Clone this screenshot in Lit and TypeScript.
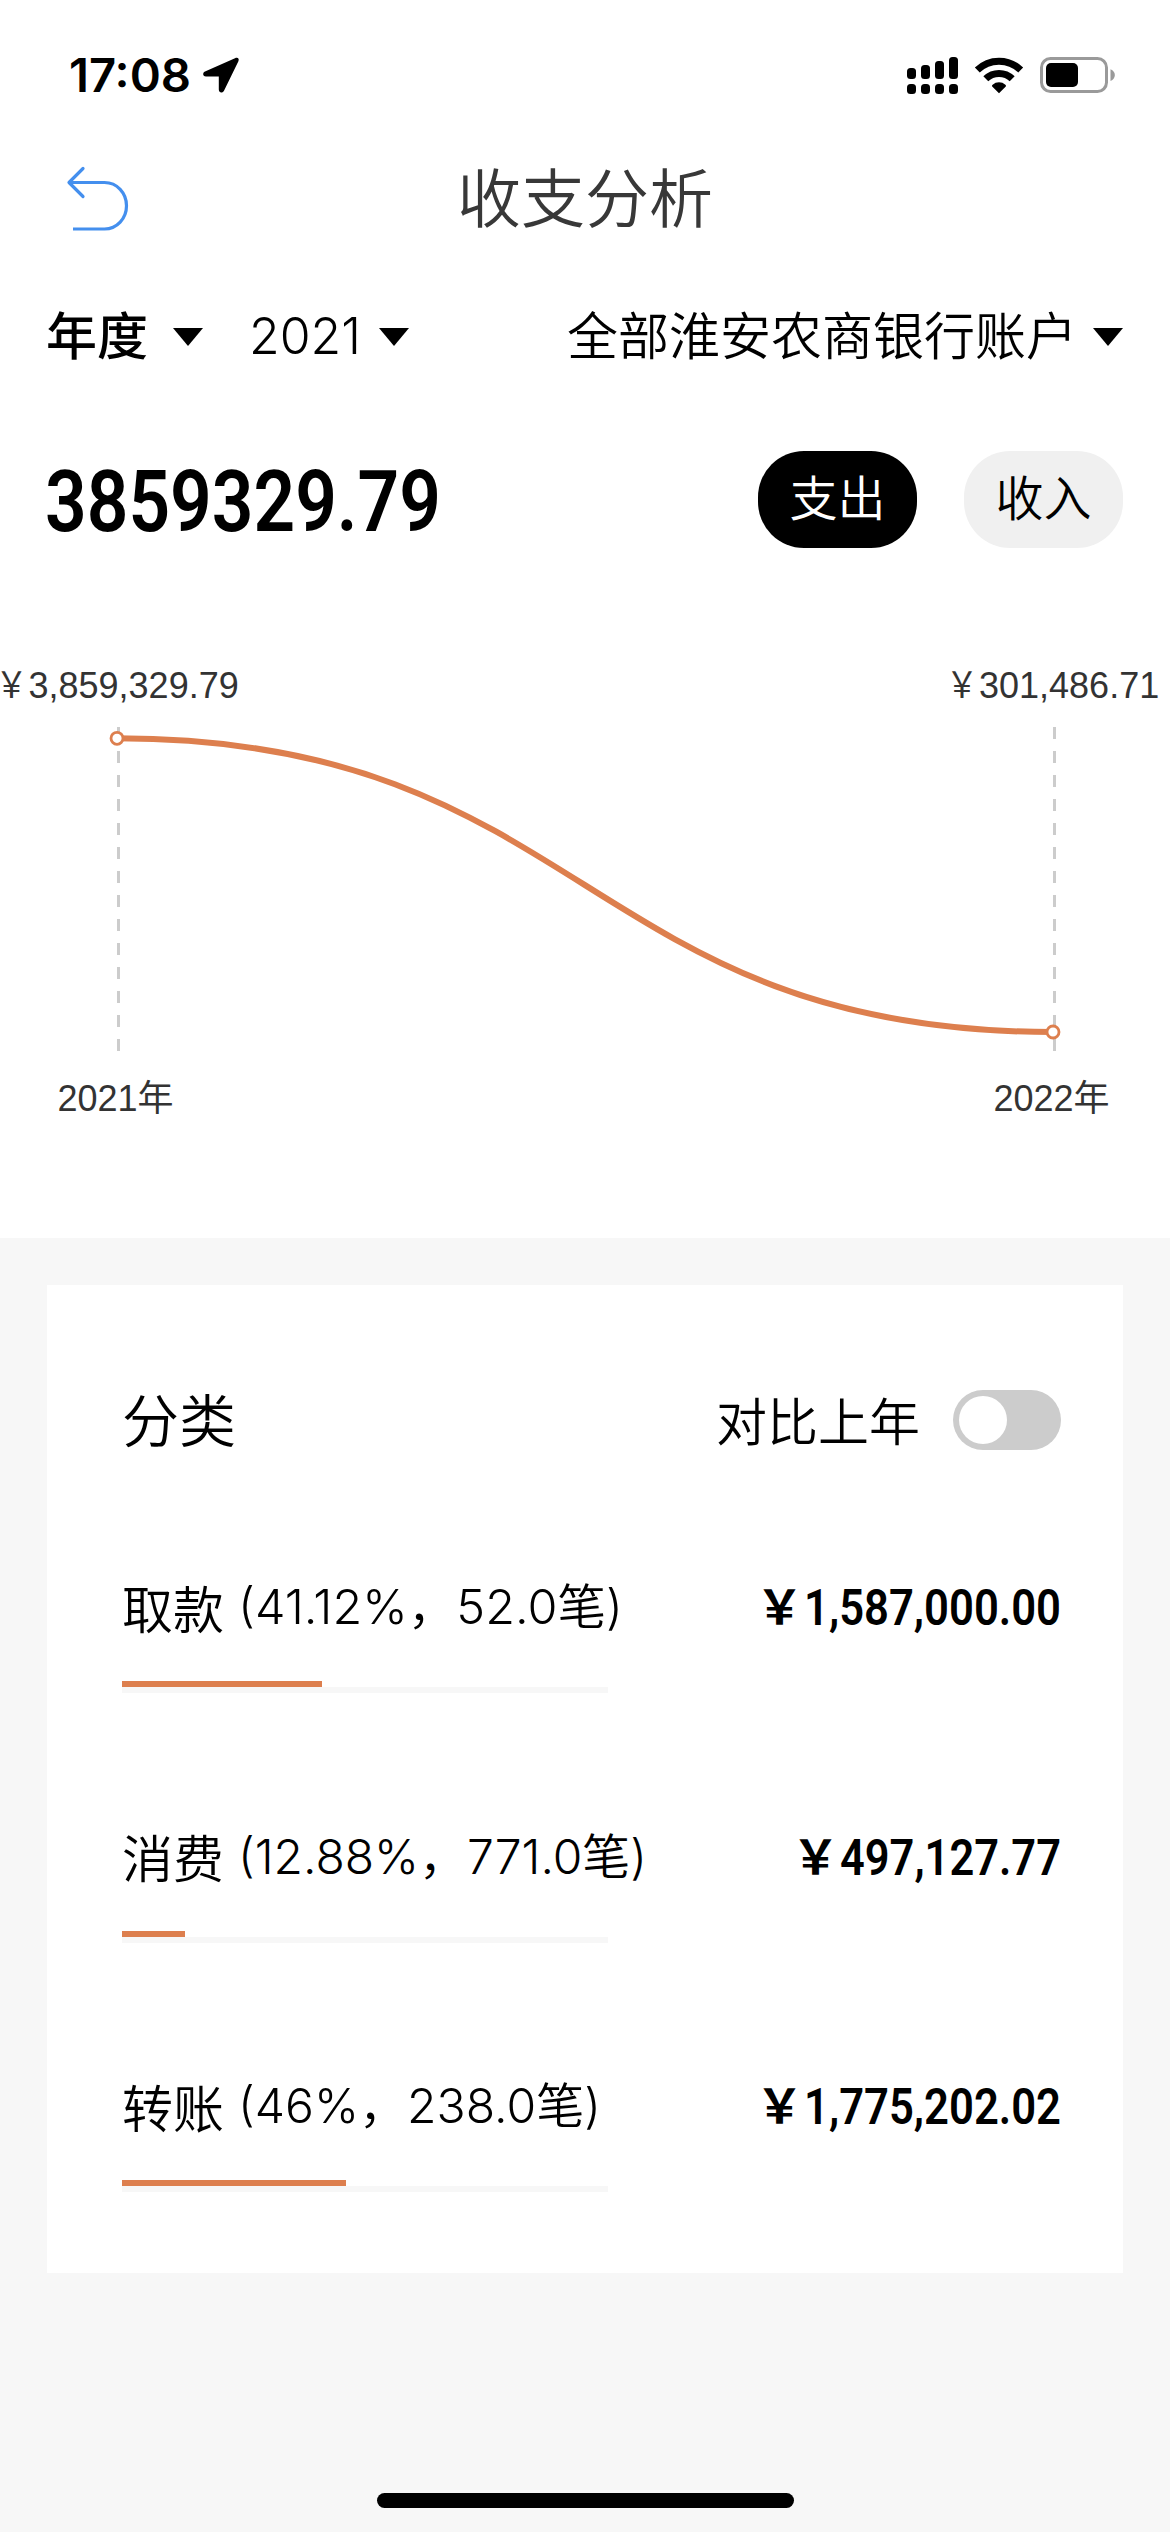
import { LitElement, html, svg, css } from "lit";
import { customElement, state } from "lit/decorators.js";

interface Category {
  name: string;
  detail: string;
  detailWidth: number;
  percent: number;
  amount: string;
  amountWidth: number;
}

interface YearPoint {
  x: number;
  y: number;
  amount: string;
  symbolX: number;
  amountX: number;
  label: string;
  labelX: number;
}

const CATEGORIES: Category[] = [
  { name: "取款", detail: "(41.12%，52.0笔)", detailWidth: 385, percent: 41.12, amount: "1,587,000.00", amountWidth: 257 },
  { name: "消费", detail: "(12.88%，771.0笔)", detailWidth: 409, percent: 12.88, amount: "497,127.77", amountWidth: 221 },
  { name: "转账", detail: "(46%，238.0笔)", detailWidth: 363, percent: 46, amount: "1,775,202.02", amountWidth: 257 },
];

const POINTS: YearPoint[] = [
  { x: 117, y: 190.3, amount: "3,859,329.79", symbolX: -4.5, amountX: 28.5, label: "2021年", labelX: 57.5 },
  { x: 1053, y: 484, amount: "301,486.71", symbolX: 946, amountX: 979, label: "2022年", labelX: 993.5 },
];

/** A line of text set to an exact advance width. */
const fitted = (text: string, width: number, height: number, baseline: number, cls: string) => html`
  <svg class="fit ${cls}" width=${width} height=${height} viewBox="0 0 ${width} ${height}">
    <text x="0" y=${baseline} textLength=${width} lengthAdjust="spacingAndGlyphs">${text}</text>
  </svg>
`;

const caret = html`
  <svg class="caret" width="30" height="18" viewBox="0 0 30 18"><path d="M0 0H30L15 18Z" /></svg>
`;

@customElement("app-root")
export class AppRoot extends LitElement {
  @state() private mode: "out" | "in" = "out";

  static styles = css`
    :host {
      display: block;
      width: 1170px;
      height: 2532px;
      overflow: hidden;
      background: #f7f7f7;
      color: #000;
      font-family: Inter, "Noto Sans CJK SC", sans-serif;
      font-weight: 350;
    }
    * { box-sizing: border-box; }
    svg { display: block; flex: none; overflow: visible; }
    .page { display: flex; flex-direction: column; height: 2532px; }
    .top { background: #fff; height: 1238px; display: flex; flex-direction: column; }

    .status { height: 150px; padding: 0 55px 0 69px; display: flex; align-items: center; }
    .time { font-size: 46px; font-weight: 600; }
    .locate { margin-left: 12px; }
    .signal { margin-left: auto; }
    .wifi { margin-left: 17px; }
    .battery { margin-left: 17px; }

    .nav { height: 94px; padding: 0 66px; display: grid; grid-template-columns: 64px 1fr 64px; align-items: center; }
    .title { margin: 0; padding-top: 2px; text-align: center; font-size: 64px; line-height: 94px; font-weight: 350; color: #383838; }

    .filters { height: 100px; margin-top: 42px; padding: 0 47px; display: flex; align-items: center; font-size: 51px; line-height: 72px; }
    .period { margin-left: -1px; padding-top: 2px; font-weight: 500; }
    .filters .caret { margin-left: 25px; margin-top: 2px; }
    .year { margin-left: 46px; font-weight: 300; }
    .filters .year + .caret { margin-left: 18px; }
    .account { margin-left: auto; padding-top: 2px; }
    .filters .account + .caret { margin-left: 16px; }

    .summary { height: 97px; margin-top: 65px; padding: 0 47px 0 45px; display: flex; align-items: center; }
    .total { font-family: Roboto, sans-serif; font-size: 86px; font-weight: 600; }
    .modes { margin-left: auto; display: flex; gap: 47px; }
    .mode { width: 159px; height: 97px; border: 0; padding: 0 0 2px; border-radius: 46px; background: #f0f0f0; color: #000; font: inherit; font-size: 48px; line-height: 95px; text-align: center; }
    .mode.on { background: #000; color: #fff; }

    .chart-text { font-family: "Liberation Sans", "Noto Sans CJK SC", sans-serif; font-size: 36px; font-weight: 400; fill: #333; }
    .chart-symbol { font-family: "Noto Sans CJK SC", sans-serif; }

    .card { margin: 47px 47px 0; height: 988px; padding: 105px 62px 0 75px; background: #fff; }
    .card-head { height: 60px; display: flex; align-items: center; }
    .card-title { margin: 0; padding-top: 3px; font-size: 57px; font-weight: 350; line-height: 60px; }
    .compare { margin-left: auto; padding-top: 5px; font-size: 51px; line-height: 60px; }
    .toggle { width: 108px; height: 60px; margin-left: 33px; padding: 6px; border-radius: 30px; background: #ccc; }
    .knob { width: 48px; height: 48px; border-radius: 50%; background: #fff; }

    .rows { padding-top: 127px; }
    .row { height: 249.67px; }
    .line { height: 60px; display: flex; align-items: center; }
    .name { width: 116px; padding-top: 7px; font-size: 51px; line-height: 60px; }
    .detail { font-size: 48px; font-weight: 350; }
    .money { margin-left: auto; display: flex; align-items: center; gap: 1px; }
    .yen { font-size: 47px; line-height: 60px; font-weight: 700; }
    .amount { font-family: Roboto, sans-serif; font-size: 49.5px; font-weight: 600; }
    .bar { width: 486px; height: 12px; margin-top: 44px; border-bottom: 6px solid #f7f7f7; }
    .fill { height: 6px; background: #dd7f4e; }

    .home { width: 417px; height: 15px; margin: auto auto 24px 377px; border-radius: 8px; background: #000; }
  `;

  private renderStatus() {
    return html`
      <div class="status">
        ${fitted("17:08", 122, 60, 46.5, "time")}
        <svg class="locate" width="36" height="36" viewBox="0 0 36 36">
          <path d="M32 1.3 2 14.6C-.8 16-.2 19.6 3 19.6H15.8V32.6C15.8 36 19.6 36.6 21 33.8L35.4 4.2C36.6 1.6 34.6 0 32 1.3Z" />
        </svg>
        <svg class="signal" width="51" height="37" viewBox="0 0 51 37">
          <rect x="0" y="11" width="9" height="11" rx="3.5" /><rect x="14" y="8" width="9" height="14" rx="3.5" />
          <rect x="28" y="4" width="9" height="18" rx="3.5" /><rect x="42" y="0" width="9" height="22" rx="3.5" />
          <rect x="0" y="27" width="9" height="10" rx="3.5" /><rect x="14" y="27" width="9" height="10" rx="3.5" />
          <rect x="28" y="27" width="9" height="10" rx="3.5" /><rect x="42" y="27" width="9" height="10" rx="3.5" />
        </svg>
        <svg class="wifi" width="48" height="38" viewBox="0 0 48 38">
          <g fill="none" stroke="#000" stroke-width="7">
            <path d="M2.3 14.1A31 31 0 0 1 45.7 14.1" />
            <path d="M10.8 22.8A18.8 18.8 0 0 1 37.2 22.8" />
          </g>
          <path d="M24 37.3 17.2 30.4C16.8 29.8 17 29.2 17.6 28.7A9.8 9.8 0 0 1 30.4 28.7C31 29.2 31.2 29.8 30.8 30.4Z" />
        </svg>
        <svg class="battery" width="75" height="36" viewBox="0 0 75 36">
          <rect x="1.5" y="1.5" width="65" height="33" rx="9" fill="none" stroke="#9a9a9a" stroke-width="3" />
          <rect x="6" y="6" width="32" height="24" rx="5" />
          <path d="M70.5 12.3C76.3 14.5 76.3 21.7 70.5 24Z" fill="#9a9a9a" />
        </svg>
      </div>
    `;
  }

  private renderChart() {
    const [a, b] = POINTS;
    const mid = (a.x + b.x) / 2;
    return html`
      <svg width="1170" height="690" viewBox="0 0 1170 690">
        ${POINTS.map(
          (p) => svg`
            <path d="M${p.x + 1.5} 179V503" stroke="#ccc" stroke-width="3" stroke-dasharray="12 12" />
            <text class="chart-text chart-symbol" x=${p.symbolX} y="149.5" textLength="32" lengthAdjust="spacingAndGlyphs">￥</text>
            <text class="chart-text" x=${p.amountX} y="149.5">${p.amount}</text>
            <text class="chart-text" x=${p.labelX} y="563">${p.label}</text>
          `
        )}
        <path d="M${a.x} ${a.y}C${mid} ${a.y} ${mid} ${b.y} ${b.x} ${b.y}" fill="none" stroke="#dd7f4e" stroke-width="6" />
        ${POINTS.map((p) => svg`<circle cx=${p.x} cy=${p.y} r="6" fill="#fff" stroke="#dd7f4e" stroke-width="2.8" />`)}
      </svg>
    `;
  }

  private renderRow(c: Category) {
    return html`
      <div class="row">
        <div class="line">
          <span class="name">${c.name}</span>
          ${fitted(c.detail, c.detailWidth, 60, 47, "detail")}
          <span class="money"><span class="yen">￥</span>${fitted(c.amount, c.amountWidth, 60, 47.5, "amount")}</span>
        </div>
        <div class="bar"><div class="fill" style="width:${c.percent}%"></div></div>
      </div>
    `;
  }

  render() {
    return html`
      <div class="page">
        <div class="top">
          ${this.renderStatus()}
          <div class="nav">
            <svg width="64" height="64" viewBox="0 0 64 64" fill="none" stroke="#448fee" stroke-width="3.2" stroke-linecap="round" stroke-linejoin="round">
              <path d="M17 2.5 3 16.5 17 30.5" />
              <path d="M3 16.5H38.5C51 16.5 60.5 27 60.5 39.7S51 63 38.5 63H7" stroke-linecap="butt" />
            </svg>
            <h1 class="title">收支分析</h1>
          </div>
          <div class="filters">
            <span class="period">年度</span>${caret}
            ${fitted("2021", 112, 72, 54, "year")}${caret}
            <span class="account">全部淮安农商银行账户</span>${caret}
          </div>
          <div class="summary">
            ${fitted("3859329.79", 396, 97, 79.5, "total")}
            <div class="modes">
              <button class="mode ${this.mode === "out" ? "on" : ""}" @click=${() => (this.mode = "out")}>支出</button>
              <button class="mode ${this.mode === "in" ? "on" : ""}" @click=${() => (this.mode = "in")}>收入</button>
            </div>
          </div>
          ${this.renderChart()}
        </div>
        <div class="card">
          <div class="card-head">
            <h2 class="card-title">分类</h2>
            <span class="compare">对比上年</span>
            <div class="toggle"><div class="knob"></div></div>
          </div>
          <div class="rows">${CATEGORIES.map((c) => this.renderRow(c))}</div>
        </div>
        <div class="home"></div>
      </div>
    `;
  }
}
